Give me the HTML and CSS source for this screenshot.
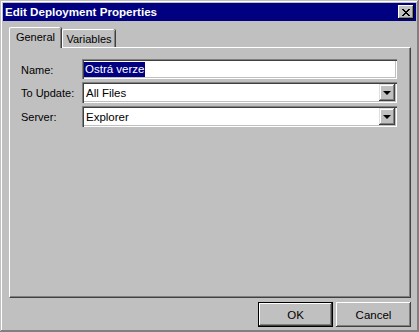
FILE: index.html
```html
<!DOCTYPE html>
<html>
<head>
<meta charset="utf-8">
<link rel="stylesheet" href="styles.css">
</head>
<body>
<div class="win">
  <div class="titlebar">
    <span class="title">Edit Deployment Properties</span>
    <div class="close">
      <svg width="8" height="7" viewBox="0 0 8 7"><path d="M0 0h2v1h1v1h2V1h1V0h2v1H7v1H6v1H5v1h1v1h1v1h1v1H6V6H5V5H3v1H2v1H0V6h1V5h1V4h1V3H2V2H1V1H0z" fill="#000"/></svg>
    </div>
  </div>
  <div class="body">
    <div class="tabs">
      <div class="tab active">General</div>
      <div class="tab">Variables</div>
    </div>
    <div class="panel">
      <div class="form">
        <label class="lbl">Name:</label>
        <div class="field name"><span class="sel">Ostrá verze</span></div>
        <label class="lbl">To Update:</label>
        <div class="field combo"><span class="val">All Files</span><div class="drop"><span class="arrow"></span></div></div>
        <label class="lbl">Server:</label>
        <div class="field combo"><span class="val">Explorer</span><div class="drop"><span class="arrow"></span></div></div>
      </div>
    </div>
    <div class="buttons">
      <div class="btn default"><span>OK</span></div>
      <div class="btn"><span>Cancel</span></div>
    </div>
  </div>
</div>
</body>
</html>
```
FILE: styles.css
```css
html, body {
  margin: 0;
  padding: 0;
  background: #c0c0c0;
}
body {
  font-family: "Liberation Sans", Arial, sans-serif;
  font-size: 11px;
  color: #000;
}
.win {
  box-sizing: border-box;
  width: 419px;
  height: 332px;
  padding: 3px;
  background: #c0c0c0;
  box-shadow: inset -1px -1px #808080, inset 1px 1px #c0c0c0, inset -2px -2px #808080, inset 2px 2px #ffffff;
  display: flex;
  flex-direction: column;
}
.titlebar {
  height: 18px;
  background: #000080;
  display: flex;
  align-items: center;
  justify-content: space-between;
  padding: 0 2px 0 2px;
}
.title {
  color: #fff;
  font-weight: bold;
  font-size: 11.6px;
  line-height: 18px;
}
.close {
  box-sizing: border-box;
  width: 16px;
  height: 14px;
  background: #c0c0c0;
  box-shadow: inset -1px -1px #000, inset 1px 1px #fff, inset -2px -2px #808080;
  display: flex;
  align-items: center;
  justify-content: center;
}
.close svg { display: block; margin-left: -1px; }
.body {
  flex: 1;
  display: flex;
  flex-direction: column;
  padding: 6px 5px 0 6px;
}
.tabs {
  height: 20px;
  display: flex;
  align-items: flex-end;
  position: relative;
  z-index: 1;
}
.tab {
  box-sizing: border-box;
  border-top: 1px solid #fff;
  border-left: 1px solid #fff;
  border-radius: 2px 2px 0 0;
  box-shadow: inset -1px 0 #808080, 1px 0 #404040;
  margin-right: 1px;
  background: #c0c0c0;
  text-align: center;
}
.tab.active {
  height: 21px;
  margin-bottom: -1px;
  width: 52px;
  line-height: 18px;
}
.tab:not(.active) {
  height: 18px;
  width: 53px;
  padding-top: 1px;
  line-height: 16px;
}
.panel {
  box-sizing: border-box;
  height: 251px;
  border-top: 1px solid #fff;
  border-left: 1px solid #fff;
  border-right: 1px solid #404040;
  border-bottom: 1px solid #404040;
  box-shadow: inset -1px -1px #808080;
  padding: 11px 13px 0 11px;
}
.form {
  display: grid;
  grid-template-columns: 61px 1fr;
  row-gap: 3px;
  align-items: center;
}
.lbl {
  line-height: 14px;
  padding-top: 1px;
}
.field {
  box-sizing: border-box;
  height: 21px;
  background: #fff;
  box-shadow: inset 1px 1px #808080, inset 2px 2px #404040, inset -1px -1px #fff, inset -2px -2px #c0c0c0;
  padding: 2px;
  display: flex;
  align-items: center;
}
.field.name { height: 20px; }
.sel {
  background: #000080;
  color: #fff;
  padding: 0 1px;
  line-height: 15px;
  font-size: 11.5px;
}
.val {
  flex: 1;
  padding-left: 2px;
  font-size: 11.5px;
}
.drop {
  box-sizing: border-box;
  width: 16px;
  height: 17px;
  background: #c0c0c0;
  box-shadow: inset -1px -1px #404040, inset 1px 1px #dfdfdf, inset -2px -2px #808080, inset 2px 2px #fff;
  display: flex;
  align-items: center;
  justify-content: center;
}
.arrow {
  width: 0;
  height: 0;
  border-left: 4px solid transparent;
  border-right: 4px solid transparent;
  border-top: 4px solid #000;
  margin-top: 1px;
}
.buttons {
  margin-top: 4px;
  display: flex;
  justify-content: flex-end;
  gap: 3px;
}
.btn {
  box-sizing: border-box;
  width: 75px;
  height: 25px;
  background: #c0c0c0;
  box-shadow: inset -1px -1px #404040, inset 1px 1px #fff, inset -2px -2px #808080;
  display: flex;
  align-items: center;
  justify-content: center;
  font-size: 11.5px;
}
.btn.default {
  border: 1px solid #000;
}
```
